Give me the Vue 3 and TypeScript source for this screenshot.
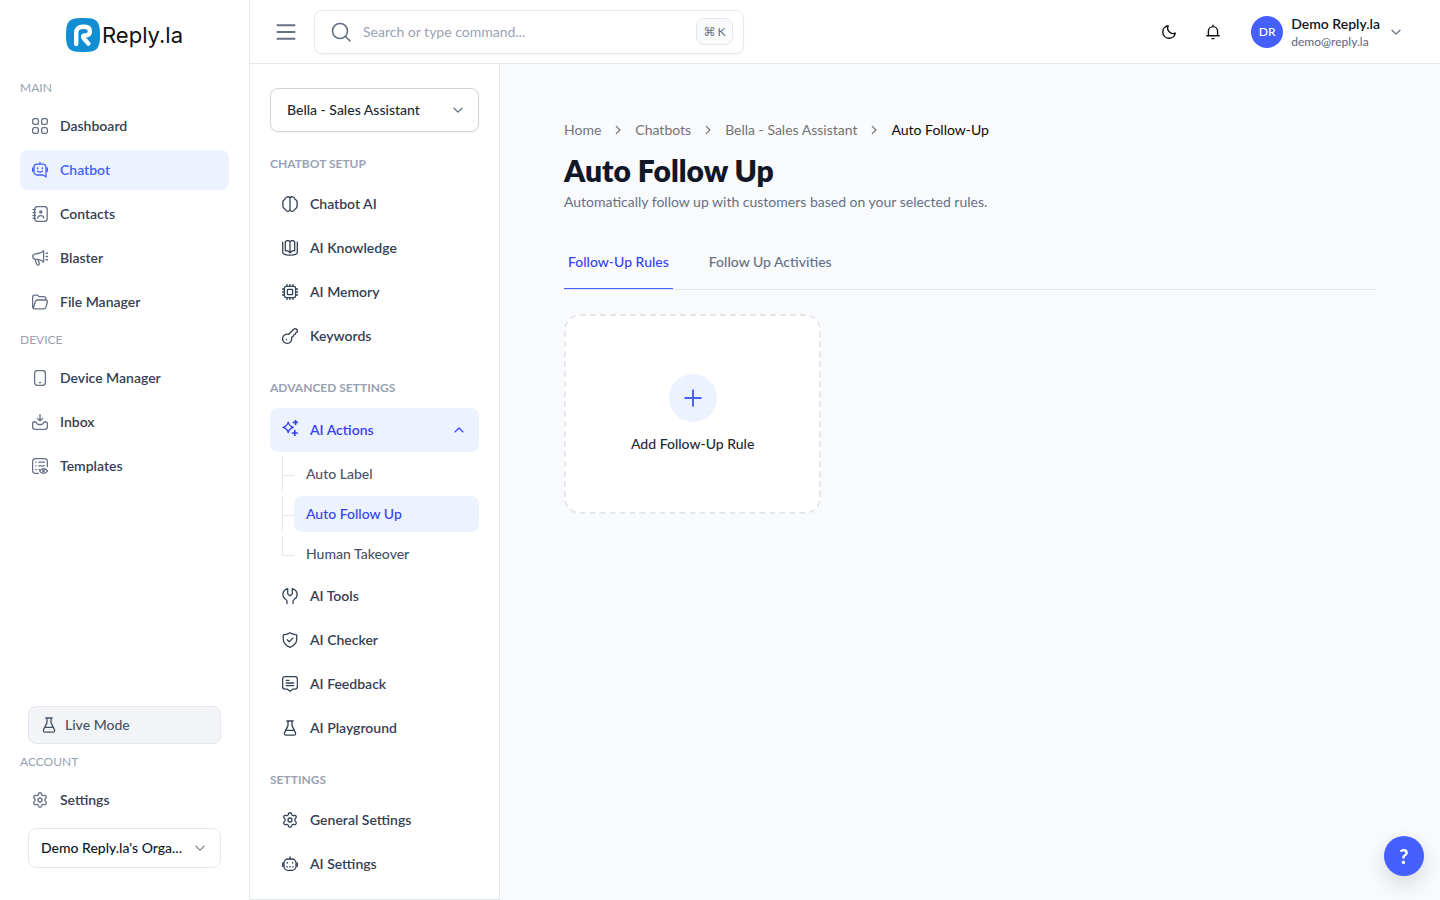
<script setup lang="ts">
import { ref } from 'vue'

interface NavItem {
  label: string
  icon: string
  active?: boolean
}
interface NavSection {
  title: string
  items: NavItem[]
}

// Inner markup of each 16x16 line icon; stroke settings are inherited from the svg element.
const icons: Record<string, string> = {
  grid: '<rect x=".6" y=".6" width="5.8" height="5.8" rx="2"/><rect x="9.6" y=".6" width="5.8" height="5.8" rx="2"/><rect x=".6" y="9.6" width="5.8" height="5.8" rx="2"/><rect x="9.6" y="9.6" width="5.8" height="5.8" rx="2"/>',
  chatbot:
    '<path d="M8 .4v1.800M5 2.200h6a3 3 0 0 1 3 3V15l-2.800-2H5a3 3 0 0 1-3-3V5.200a3 3 0 0 1 3-3zM5.600 9c1.300 1.200 3.500 1.200 4.800 0"/><path d="M.8 6v3.200M15.200 6v3.200" stroke-width="1.700"/><path d="M5.600 6v.3M10.400 6v.3" stroke-width="1.700"/>',
  contacts:
    '<rect x="2.600" y=".6" width="12.600" height="14.800" rx="3"/><path d="M1 3.600h2.600M1 6.600h2.600M1 9.500h2.600M1 12.400h2.600M5.800 12c.3-3.300 5.700-3.300 6 0"/><circle cx="8.800" cy="6" r="1.100" fill="currentColor"/>',
  blaster:
    '<path d="M11.600.8v11.400C9.700 10.200 7.200 9.300 3.200 9.200 1.500 9 .7 8 .7 6.500S1.500 4 3.200 3.800c4-.1 6.500-1 8.400-3zM3 9.300l1.700 4.900c.8 1.700 3 .7 2.500-.9L6 9.600M14 3.300l1.500-.3M14 6.500h1.600M14 9.700l1.500.3"/>',
  folder:
    '<path d="M1.800 14.600C1 14.300.6 13.700.6 12.500V3.300C.6 1.900 1.300 1.200 2.700 1.200h2.200c.8 0 1.100.3 1.600 1l.4.500h4.900c1.300 0 2 .8 2 2v1.200M5.700 6h8c1.300 0 1.900.8 1.600 2l-1.200 4.900c-.3 1.300-1 1.900-2.300 1.900H2.700c-1 0-1.300-.6-1.100-1.500L3.300 7.800C3.600 6.500 4.400 6 5.700 6z"/>',
  device: '<rect x="2.600" y=".6" width="10.800" height="14.800" rx="2.800"/><path d="M7.300 12.600h1.400"/>',
  inbox:
    '<path d="M8 .6v6.200M5.400 4.400 8 6.900l2.600-2.500M3 8H2C1.100 8 .6 8.500.6 9.400v3.300c0 1.700 1 2.600 2.700 2.600h9.400c1.700 0 2.700-.9 2.700-2.600V9.400c0-.9-.5-1.400-1.400-1.400h-1c-.8 0-1.200.4-1.500 1.100-.4 1-1.100 1.400-2 1.400h-3c-.9 0-1.600-.4-2-1.400C4.200 8.400 3.800 8 3 8z"/>',
  templates:
    '<path d="M6.400 15.400H3.600c-2 0-3-1-3-3V3.600c0-2 1-3 3-3h8.800c2 0 3 1 3 3v5M3.800 4.200h.4M3.800 7.800h.4M3.800 11.500h.4M6.800 4.200h5.600M6.800 7.800h5.600M6.800 11.300h.5"/><path d="M7.600 13c1.800-3 6-3 7.900 0-1.900 3-6.100 3-7.900 0z"/><circle cx="11.500" cy="13" r=".7"/>',
  flask:
    '<path d="M4.800 1h6.400M6 1v4.600L2.600 12.600c-.6 1.600 0 2.600 1.500 2.600h7.800c1.500 0 2.100-1 1.500-2.600L10 5.600V1M4.300 10.400h7.400"/>',
  gear: '<circle cx="8" cy="8" r="2"/><path d="M6.200 2.600C6.600.1 9.400.1 9.800 2.600c.1.800 1 1.300 1.800 1 2.300-1 3.700 1.400 1.800 3-.7.600-.9 1.900 0 2.700 1.900 1.600.5 4-1.800 3.100-.8-.3-1.700.2-1.800 1-.4 2.500-3.200 2.500-3.600 0-.1-.8-1-1.300-1.800-1-2.300.9-3.700-1.500-1.800-3.100.9-.8.7-2.100 0-2.700-1.900-1.600-.5-4 1.800-3 .8.300 1.700-.2 1.800-1z"/>',
  brain:
    '<path d="M8 1.800v12.400C6.700 16 4 15.600 3.200 13.400 1.300 12.600.6 10.700 1 8.600.300 6 1.100 4 3 3.100 3.700.6 6.500 0 8 1.800zM8 1.800C9.500 0 12.300.6 13 3.100c1.900.9 2.700 2.900 2 5.500.4 2.100-.3 4-2.200 4.800C12 15.600 9.300 16 8 14.200"/>',
  knowledge:
    '<path d="M.7 2.200v10.600C3.200 16 12.800 16 15.300 12.800V2.200M8 1.500v11.300M8 1.500C6.500.2 4.800.3 3.300 1.700v9.100C4.800 10.500 6.700 11.200 8 12.800 9.300 11.200 11.200 10.500 12.700 10.800V1.700C11.200.3 9.500.2 8 1.500z"/>',
  memory:
    '<rect x="2.400" y="2.400" width="11.200" height="11.200" rx="2"/><rect x="5.400" y="5.400" width="5.200" height="5.200" rx=".5"/><path d="M5 2.200V.5M8 2.200V.5M11 2.200V.5M5 15.500v-1.700M8 15.500v-1.700M11 15.500v-1.700M2.200 5H.5M2.200 8H.5M2.200 11H.5M15.500 5h-1.700M15.500 8h-1.700M15.500 11h-1.700"/>',
  key: '<path d="M6.600 6.300 11.800 1.200c1.700-1.300 4 .3 3.500 2.300-.2.900-.9 1.300-1.700 1.400l-.5 1.600-1.500.5-.4 1.600-1.600.6c.6 3.400-1.300 6.100-4.400 6.100-2.900 0-4.800-2.200-4.600-4.800.2-2.800 2.900-4.900 6-4.200z"/><path d="M4.400 11.500h.2"/>',
  sparkles:
    '<path d="M6.200 2.200c.8 3.400 1.900 4.500 5.200 5.200-3.300.8-4.400 1.900-5.200 5.200C5.400 9.300 4.300 8.200 1 7.400c3.300-.7 4.400-1.800 5.200-5.200z" stroke-width="1.300"/><path d="M13.500.5v3.800M11.600 2.400h3.800M12.800 10.600v4.800M10.400 13h4.800" stroke-width="1.700"/>',
  tools:
    '<path d="M5.700.7C2.400 1.700.7 4.400.9 7.100c.2 1.900 1.200 3.200 2.700 4.100 1 .6 1.400 1.200 1.400 2.300v2M5.700.7v4.500c0 1 .7 1.600 1.500 2.100.6.300 1 .3 1.600 0 .8-.5 1.500-1.100 1.500-2.100V.7c3.300 1 5 3.700 4.800 6.400-.2 1.900-1.200 3.200-2.700 4.100-1 .6-1.400 1.200-1.400 2.300v2"/>',
  shield:
    '<path d="M8 .7c1.700 1.200 3.600 1.800 6.700 2.100v4.700c0 3.700-2.500 6.100-6.700 7.900-4.200-1.800-6.700-4.200-6.700-7.900V2.800C4.400 2.500 6.300 1.900 8 .7zM5.200 7.700l2 2 3.700-3.600"/>',
  feedback:
    '<path d="M3 .7h10c1.700 0 2.400.7 2.400 2.300v7.800c0 1.600-.7 2.300-2.400 2.300h-2L8 15.300l-3-2.200H3c-1.700 0-2.400-.7-2.400-2.300V3C.6 1.400 1.300.7 3 .7zM4.300 4.400h2.600M4.300 7h7.400M4.300 9.600h7.400"/>',
  robot:
    '<rect x="2" y="3" width="12" height="11.300" rx="4"/><path d="M8 .8V3"/><path d="M.8 7v3.200M15.200 7v3.200" stroke-width="1.700"/><path d="M5.300 6.800v.3M10.700 6.800v.3" stroke-width="1.500"/><path d="M4.800 10.800h.6M7.700 10.800h.6M10.600 10.800h.6"/>',
  moon: '<path d="M7.200 1.700a6.300 6.300 0 1 0 7.100 7.400 5.500 5.500 0 0 1-7.100-7.400z" stroke-width="1.400"/>',
  bell: '<path d="M3.400 11.600V7.200a4.600 4.600 0 0 1 9.200 0v4.400M1.800 11.800h12.400M6.900 14.600h2.200M8 1.200v1.400" stroke-width="1.400"/>',
  search: '<circle cx="7.200" cy="7.200" r="6"/><path d="m11.600 11.600 3.600 3.600"/>',
  down: '<path d="m4 6.200 4 3.900 4-3.900"/>',
  up: '<path d="m4 9.900 4-3.900 4 3.900"/>',
  right: '<path d="m6 3.800 4.200 4.200L6 12.200"/>',
  menu: '<path d="M1.200 2.600h13.600M1.200 8h13.600M1.200 13.400h13.600"/>',
  plus: '<path d="M8 1v14M1 8h14"/>',
}

const mainNav: NavSection[] = [
  {
    title: 'MAIN',
    items: [
      { label: 'Dashboard', icon: 'grid' },
      { label: 'Chatbot', icon: 'chatbot', active: true },
      { label: 'Contacts', icon: 'contacts' },
      { label: 'Blaster', icon: 'blaster' },
      { label: 'File Manager', icon: 'folder' },
    ],
  },
  {
    title: 'DEVICE',
    items: [
      { label: 'Device Manager', icon: 'device' },
      { label: 'Inbox', icon: 'inbox' },
      { label: 'Templates', icon: 'templates' },
    ],
  },
]

const setupItems: NavItem[] = [
  { label: 'Chatbot AI', icon: 'brain' },
  { label: 'AI Knowledge', icon: 'knowledge' },
  { label: 'AI Memory', icon: 'memory' },
  { label: 'Keywords', icon: 'key' },
]
const advancedItems: NavItem[] = [
  { label: 'AI Tools', icon: 'tools' },
  { label: 'AI Checker', icon: 'shield' },
  { label: 'AI Feedback', icon: 'feedback' },
  { label: 'AI Playground', icon: 'flask' },
]
const settingsItems: NavItem[] = [
  { label: 'General Settings', icon: 'gear' },
  { label: 'AI Settings', icon: 'robot' },
]
const actions = ['Auto Label', 'Auto Follow Up', 'Human Takeover']
const currentAction = ref('Auto Follow Up')
const actionsOpen = ref(true)
const crumbs = ['Home', 'Chatbots', 'Bella - Sales Assistant']
const tabs = ['Follow-Up Rules', 'Follow Up Activities']
const currentTab = ref(tabs[0])
const query = ref('')
</script>

<template>
  <div class="app">
    <aside class="sidebar">
      <a class="logo" href="#">
        <svg class="logo-mark" viewBox="0 0 34 34" aria-hidden="true">
          <path class="logo-tile" d="M17 0c13.500 0 17 2.500 17 17s-3.500 17-17 17S0 31.500 0 17 3.500 0 17 0z" />
          <path class="logo-r" d="M10.200 26V15.200c0-4.400 2.500-6.400 6.400-6.400h2c3.300 0 5.300 1.600 5.300 4.400 0 3-2.200 4.300-5 4.300-1.900 0-2.500 1.200-1.200 2.700L22.400 25.600" />
        </svg>
        <span class="logo-text">Reply.la</span>
      </a>

      <nav class="nav">
        <section v-for="s in mainNav" :key="s.title" class="nav-section">
          <h2 class="side-title">{{ s.title }}</h2>
          <a v-for="i in s.items" :key="i.label" href="#" class="item" :class="{ active: i.active }">
            <svg class="icon" viewBox="0 0 16 16" aria-hidden="true" v-html="icons[i.icon]" />
            {{ i.label }}
          </a>
        </section>
      </nav>

      <div class="side-foot">
        <button class="mode" type="button">
          <svg class="icon" viewBox="0 0 16 16" aria-hidden="true" v-html="icons.flask" />
          Live Mode
        </button>
        <h2 class="side-title">ACCOUNT</h2>
        <a href="#" class="item">
          <svg class="icon" viewBox="0 0 16 16" aria-hidden="true" v-html="icons.gear" />
          Settings
        </a>
        <div class="select org">
          <select aria-label="Organization">
            <option>Demo Reply.la's Orga...</option>
          </select>
          <svg class="icon chevron" viewBox="0 0 16 16" aria-hidden="true" v-html="icons.down" />
        </div>
      </div>
    </aside>

    <div class="body">
      <header class="topbar">
        <button class="menu" type="button" aria-label="Toggle sidebar">
          <svg class="menu-icon" viewBox="0 0 16 16" aria-hidden="true" v-html="icons.menu" />
        </button>
        <label class="search">
          <svg class="search-icon" viewBox="0 0 16 16" aria-hidden="true" v-html="icons.search" />
          <input v-model="query" type="text" placeholder="Search or type command..." aria-label="Search" />
          <kbd><span>⌘</span><span>K</span></kbd>
        </label>
        <div class="tools">
          <button class="tool" type="button" aria-label="Dark mode">
            <svg class="icon" viewBox="0 0 16 16" aria-hidden="true" v-html="icons.moon" />
          </button>
          <button class="tool" type="button" aria-label="Notifications">
            <svg class="icon" viewBox="0 0 16 16" aria-hidden="true" v-html="icons.bell" />
          </button>
          <button class="user" type="button">
            <span class="avatar">DR</span>
            <span class="who">
              <span class="name">Demo Reply.la</span>
              <span class="mail">demo@reply.la</span>
            </span>
            <svg class="icon chevron" viewBox="0 0 16 16" aria-hidden="true" v-html="icons.down" />
          </button>
        </div>
      </header>

      <div class="columns">
        <aside class="panel">
          <div class="select bot">
            <select aria-label="Chatbot">
              <option>Bella - Sales Assistant</option>
            </select>
            <svg class="icon chevron" viewBox="0 0 16 16" aria-hidden="true" v-html="icons.down" />
          </div>

          <nav class="panel-nav">
            <h2 class="panel-title">CHATBOT SETUP</h2>
            <a v-for="i in setupItems" :key="i.label" href="#" class="item">
              <svg class="icon" viewBox="0 0 16 16" aria-hidden="true" v-html="icons[i.icon]" />
              {{ i.label }}
            </a>

            <h2 class="panel-title">ADVANCED SETTINGS</h2>
            <button
              type="button"
              class="item group active"
              :aria-expanded="actionsOpen"
              @click="actionsOpen = !actionsOpen"
            >
              <svg class="icon raised" viewBox="0 0 16 16" aria-hidden="true" v-html="icons.sparkles" />
              AI Actions
              <svg class="icon chevron" viewBox="0 0 16 16" aria-hidden="true" v-html="actionsOpen ? icons.up : icons.down" />
            </button>
            <ul v-if="actionsOpen" class="tree">
              <li v-for="a in actions" :key="a">
                <a href="#" class="leaf" :class="{ active: a === currentAction }" @click.prevent="currentAction = a">{{ a }}</a>
              </li>
            </ul>
            <a v-for="i in advancedItems" :key="i.label" href="#" class="item">
              <svg class="icon" viewBox="0 0 16 16" aria-hidden="true" v-html="icons[i.icon]" />
              {{ i.label }}
            </a>

            <h2 class="panel-title">SETTINGS</h2>
            <a v-for="i in settingsItems" :key="i.label" href="#" class="item">
              <svg class="icon" viewBox="0 0 16 16" aria-hidden="true" v-html="icons[i.icon]" />
              {{ i.label }}
            </a>
          </nav>
        </aside>

        <main class="content">
          <nav class="crumbs" aria-label="Breadcrumb">
            <template v-for="c in crumbs" :key="c">
              <a href="#">{{ c }}</a>
              <svg class="crumb-sep" viewBox="0 0 16 16" aria-hidden="true" v-html="icons.right" />
            </template>
            <span class="here">Auto Follow-Up</span>
          </nav>
          <h1>Auto Follow Up</h1>
          <p class="lead">Automatically follow up with customers based on your selected rules.</p>

          <div class="tabs" role="tablist">
            <button
              v-for="t in tabs"
              :key="t"
              type="button"
              role="tab"
              class="tab"
              :class="{ active: t === currentTab }"
              :aria-selected="t === currentTab"
              @click="currentTab = t"
            >
              {{ t }}
            </button>
          </div>

          <div class="cards">
            <button class="add" type="button">
              <span class="add-icon">
                <svg class="plus" viewBox="0 0 16 16" aria-hidden="true" v-html="icons.plus" />
              </span>
              Add Follow-Up Rule
            </button>
          </div>
        </main>
      </div>
    </div>

    <button class="help" type="button" aria-label="Help">?</button>
  </div>
</template>

<style>
body {
  margin: 0;
  background: #f9fafb;
}
</style>

<style scoped>
.app,
.app * {
  box-sizing: border-box;
}
.app {
  display: flex;
  min-height: 100vh;
  font-family: Lato, "Liberation Sans", sans-serif;
  font-size: 14px;
  line-height: 20px;
  color: #101828;
  background: #f9fafc;
}
h1,
h2,
p,
ul {
  margin: 0;
  padding: 0;
}
a {
  color: inherit;
  text-decoration: none;
}
button,
input,
select {
  font: inherit;
  color: inherit;
  margin: 0;
  padding: 0;
  border: 0;
  background: none;
}
button {
  cursor: pointer;
}
svg {
  display: block;
  flex: none;
  fill: none;
  stroke: currentColor;
  stroke-width: 1.3;
  stroke-linecap: round;
  stroke-linejoin: round;
}
.icon {
  width: 16px;
  height: 16px;
}

.sidebar {
  display: flex;
  flex-direction: column;
  flex: none;
  width: 250px;
  padding: 18px 20px 32px;
  background: #fff;
  border-right: 1px solid #e4e7ec;
}
.logo {
  display: flex;
  justify-content: center;
  align-items: center;
  gap: 2px;
  height: 34px;
  margin-bottom: 26px;
}
.logo-mark {
  width: 34px;
  height: 34px;
}
.logo-tile {
  fill: #118fd2;
  stroke: none;
}
.logo-r {
  stroke: #fff;
  stroke-width: 4.4;
}
.logo-text {
  font-family: Inter, "Open Sans", sans-serif;
  font-size: 22px;
  line-height: 34px;
  color: #111;
}
.nav,
.nav-section {
  display: flex;
  flex-direction: column;
}
.nav {
  gap: 8px;
}
.nav-section {
  gap: 4px;
}
.side-title {
  font-size: 12px;
  font-weight: 400;
  line-height: 20px;
  color: #98a2b3;
}
.nav-section .side-title {
  margin-bottom: 4px;
}
.item {
  display: flex;
  align-items: center;
  gap: 12px;
  width: 100%;
  height: 40px;
  padding: 0 12px;
  border-radius: 8px;
  font-weight: 600;
  color: #344054;
  text-align: left;
}
.sidebar .item .icon {
  color: #667085;
}
.item.active {
  color: #465fff;
  background: #ecf3ff;
}
.sidebar .item.active .icon {
  color: #465fff;
}
.side-foot {
  display: flex;
  flex-direction: column;
  gap: 8px;
  margin-top: auto;
}
.mode {
  display: flex;
  align-items: center;
  gap: 8px;
  height: 38px;
  margin: 0 8px;
  padding: 0 12px;
  border: 1px solid #e4e7ec;
  border-radius: 8px;
  background: #f2f4f7;
  font-weight: 500;
  color: #475467;
}
.select {
  display: grid;
  align-items: center;
}
.select select,
.select .chevron {
  grid-area: 1 / 1;
}
.select select {
  width: 100%;
  appearance: none;
  border: 1px solid #e4e7ec;
  border-radius: 8px;
  background: #fff;
  font-weight: 500;
  outline-offset: 1px;
}
.select .chevron {
  justify-self: end;
  pointer-events: none;
}
.org {
  margin: 0 8px;
}
.org select {
  height: 40px;
  padding: 0 32px 0 12px;
}
.org .chevron {
  margin-right: 13px;
  color: #858b96;
}

.body {
  display: flex;
  flex-direction: column;
  flex: 1;
  min-width: 0;
}
.topbar {
  display: flex;
  align-items: center;
  height: 64px;
  padding: 0 36px 0 16px;
  background: #fff;
  border-bottom: 1px solid #e4e7ec;
}
.menu {
  display: grid;
  place-items: center;
  width: 40px;
  height: 40px;
  margin-right: 8px;
  color: #667085;
}
.menu-icon {
  width: 20px;
  height: 20px;
  stroke-width: 1.6;
}
.search {
  display: flex;
  align-items: center;
  gap: 12px;
  flex: 0 1 430px;
  height: 44px;
  padding: 0 10px 0 16px;
  border: 1px solid #e4e7ec;
  border-radius: 8px;
  box-shadow: 0 1px 2px rgba(16, 24, 40, 0.05);
}
.search-icon {
  width: 20px;
  height: 20px;
  color: #667085;
}
.search input {
  flex: 1;
  min-width: 0;
  outline: none;
}
.search input::placeholder {
  color: #98a2b3;
  opacity: 1;
}
kbd {
  display: flex;
  align-items: center;
  justify-content: center;
  gap: 2px;
  width: 37px;
  height: 27px;
  border: 1px solid #e4e7ec;
  border-radius: 8px;
  background: #f9fafb;
  font-family: Lato, "DejaVu Sans", sans-serif;
  font-size: 12px;
  color: #667085;
}
.tools {
  display: flex;
  align-items: center;
  margin-left: auto;
}
.tool {
  display: grid;
  place-items: center;
  width: 44px;
  height: 44px;
  color: #101010;
}
.user {
  display: flex;
  align-items: center;
  gap: 8px;
  margin-left: 16px;
  text-align: left;
}
.avatar {
  display: grid;
  place-items: center;
  width: 32px;
  height: 32px;
  border-radius: 50%;
  background: #465fff;
  font-size: 12px;
  font-weight: 500;
  color: #fff;
}
.who {
  display: flex;
  flex-direction: column;
}
.name {
  font-weight: 600;
  line-height: 20px;
}
.mail {
  font-size: 12px;
  font-weight: 500;
  line-height: 16px;
  color: #667085;
}
.chevron {
  color: #667085;
}

.columns {
  display: flex;
  flex: 1;
}
.panel {
  flex: none;
  width: 250px;
  padding: 24px 20px 15px;
  background: #fff;
  border-right: 1px solid #e4e7ec;
  border-bottom: 1px solid #e4e7ec;
}
.bot select {
  height: 44px;
  padding: 0 36px 0 16px;
  border-color: #d0d5dd;
  color: #1d2939;
  box-shadow: 0 1px 2px rgba(16, 24, 40, 0.05);
}
.bot .chevron {
  margin-right: 13px;
}
.panel-nav {
  display: flex;
  flex-direction: column;
  gap: 4px;
}
.panel-title {
  margin: 20px 0 8px;
  font-size: 12px;
  font-weight: 700;
  line-height: 16px;
  color: #98a2b3;
}
.panel-title:first-child {
  margin-top: 24px;
}
.group {
  height: 44px;
}
.group.active,
.leaf.active {
  color: #3641f5;
}
.group .raised {
  align-self: flex-start;
  margin-top: 12px;
}
.group .chevron {
  margin-left: auto;
  color: inherit;
}
.tree {
  display: flex;
  flex-direction: column;
  gap: 4px;
  padding-left: 12px;
  list-style: none;
}
.tree li {
  display: grid;
  grid-template-columns: 11px 1fr;
  height: 36px;
  border-left: 1px solid #e4e7ec;
}
.tree li::before {
  content: "";
  height: 19px;
  border-bottom: 1px solid #e4e7ec;
}
.tree li:last-child {
  grid-template-columns: 12px 1fr;
  border-left: 0;
}
.tree li:last-child::before {
  border-left: 1px solid #e4e7ec;
}
.leaf {
  display: flex;
  align-items: center;
  padding: 0 12px;
  border-radius: 8px;
  font-weight: 500;
  color: #475467;
}
.leaf.active {
  background: #ecf3ff;
}

.content {
  flex: 1;
  min-width: 0;
  padding: 56px 64px;
}
.crumbs {
  display: flex;
  align-items: center;
  gap: 10px;
  color: #737373;
}
.crumb-sep {
  width: 14px;
  height: 14px;
}
.here {
  color: #0a0a0a;
}
h1 {
  margin-top: 12px;
  font-size: 30px;
  font-weight: 800;
  line-height: 36px;
}
.lead {
  margin-top: 4px;
  color: #667085;
}
.tabs {
  display: flex;
  gap: 32px;
  height: 54px;
  margin-top: 24px;
  border-bottom: 1px solid #e4e7ec;
}
.tab {
  height: 53px;
  padding: 0 4px;
  border-bottom: 1px solid transparent;
  font-weight: 500;
  color: #667085;
}
.tab.active {
  border-color: #465fff;
  color: #3641f5;
}
.cards {
  display: grid;
  grid-template-columns: repeat(3, 1fr);
  gap: 20px;
  margin-top: 24px;
}
.add {
  display: flex;
  flex-direction: column;
  align-items: center;
  justify-content: center;
  gap: 12px;
  min-height: 200px;
  border: 2px dashed #e4e7ec;
  border-radius: 16px;
  background: #fff;
  font-weight: 500;
  color: #1d2939;
}
.add-icon {
  display: grid;
  place-items: center;
  width: 48px;
  height: 48px;
  border-radius: 50%;
  background: #ecf3ff;
  color: #465fff;
}
.plus {
  width: 18px;
  height: 18px;
  stroke-width: 1.7;
}
.help {
  position: fixed;
  right: 16px;
  bottom: 24px;
  width: 40px;
  height: 40px;
  border-radius: 50%;
  background: #465fff;
  box-shadow: 0 8px 20px rgba(16, 24, 40, 0.14);
  font-size: 20px;
  font-weight: 900;
  color: #fff;
}
</style>
